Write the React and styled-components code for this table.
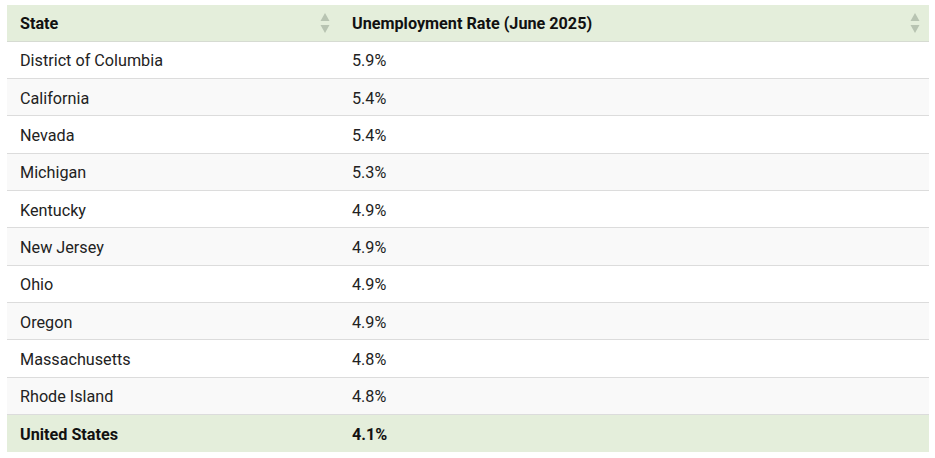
import styled, { createGlobalStyle } from 'styled-components'

const GlobalStyle = createGlobalStyle`
  body {
    margin: 0;
    padding: 5px 6px 0 7px;
    background: #fff;
    font-family: Roboto, "Liberation Sans", Arial, sans-serif;
  }
`

const Table = styled.table`
  width: 922px;
  border-collapse: collapse;
  font-size: 16.2px;
  color: #222;
`

const HeadCell = styled.th`
  position: relative;
  text-align: left;
  font-weight: 700;
  color: #111;
  background: #e4eedb;
  height: 36px;
  box-sizing: border-box;
  padding: 2px 30px 0 ${(p) => p.$padLeft || '13px'};
  width: ${(p) => p.$width || 'auto'};
  border-bottom: 1px solid #d6dbd2;
`

const SortIcon = styled.svg`
  position: absolute;
  right: ${(p) => p.$right || '9px'};
  top: 7px;
`

const Row = styled.tr`
  background: ${(p) => (p.$total ? '#e4eedb' : p.$striped ? '#f9f9f9' : '#fff')};
  font-weight: ${(p) => (p.$total ? 700 : 400)};
  color: ${(p) => (p.$total ? '#111' : '#222')};
`

const Cell = styled.td`
  height: 37.36px;
  box-sizing: border-box;
  padding: 2px 13px 0 ${(p) => p.$padLeft || '13px'};
  border-bottom: ${(p) => (p.$last ? 'none' : '1px solid #dcdcdc')};
`

const rows = [
  ['District of Columbia', '5.9%'],
  ['California', '5.4%'],
  ['Nevada', '5.4%'],
  ['Michigan', '5.3%'],
  ['Kentucky', '4.9%'],
  ['New Jersey', '4.9%'],
  ['Ohio', '4.9%'],
  ['Oregon', '4.9%'],
  ['Massachusetts', '4.8%'],
  ['Rhode Island', '4.8%'],
]

function Sort({ right }) {
  return (
    <SortIcon width="10" height="22" viewBox="0 0 10 22" $right={right}>
      <polygon points="5,1 9.5,9 0.5,9" fill="#b8c4b2" />
      <polygon points="0.5,13 9.5,13 5,21" fill="#b8c4b2" />
    </SortIcon>
  )
}

export default function App() {
  return (
    <>
      <GlobalStyle />
      <Table>
        <thead>
          <tr>
            <HeadCell $width="333px">
              State
              <Sort right="10px" />
            </HeadCell>
            <HeadCell $padLeft="12px">
              Unemployment Rate (June 2025)
              <Sort right="9px" />
            </HeadCell>
          </tr>
        </thead>
        <tbody>
          {rows.map(([state, rate], i) => (
            <Row key={state} $striped={i % 2 === 1}>
              <Cell>{state}</Cell>
              <Cell $padLeft="12px">{rate}</Cell>
            </Row>
          ))}
          <Row $total>
            <Cell $last>United States</Cell>
            <Cell $last $padLeft="12px">4.1%</Cell>
          </Row>
        </tbody>
      </Table>
    </>
  )
}
